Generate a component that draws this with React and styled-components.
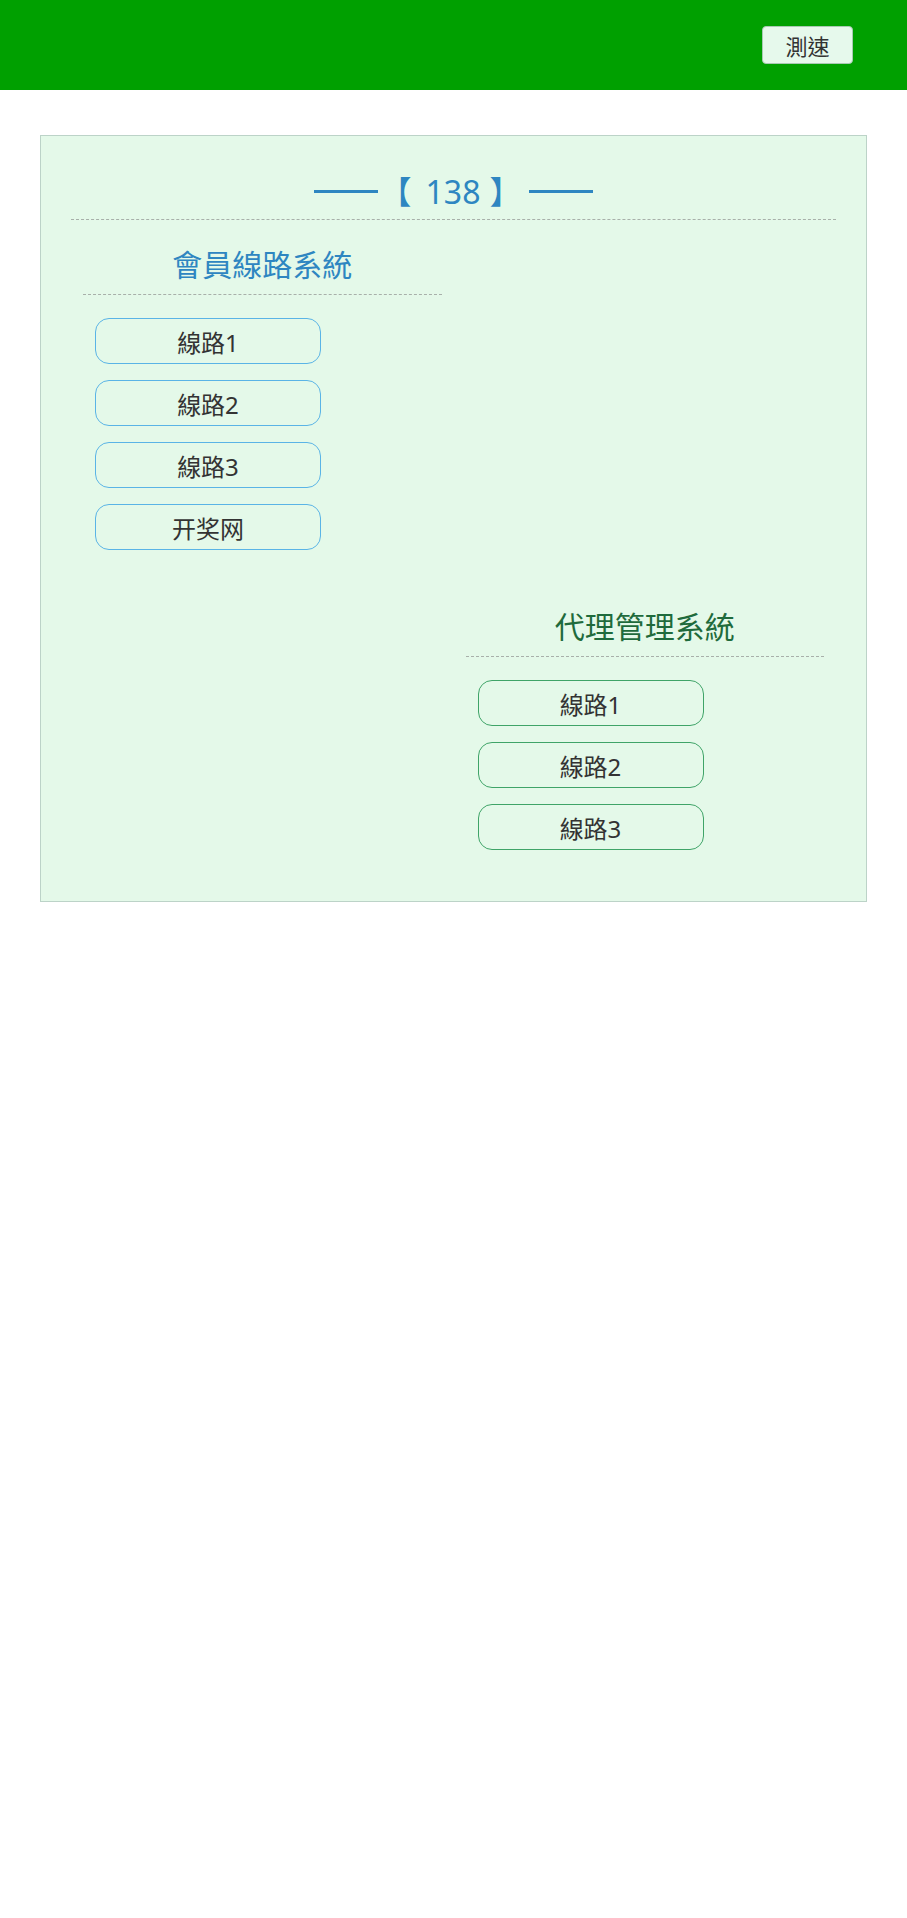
import React from 'react';
import styled, { createGlobalStyle } from 'styled-components';

const GlobalStyle = createGlobalStyle`
  html, body {
    margin: 0;
    padding: 0;
    background: #ffffff;
    font-family: "Noto Sans", "Noto Sans CJK TC", sans-serif;
  }
`;

const Header = styled.header`
  height: 90px;
  background: #00a000;
  display: flex;
  align-items: center;
  justify-content: flex-end;
  padding: 0 54px 0 0;
  box-sizing: border-box;
`;

const SpeedButton = styled.button`
  width: 91px;
  height: 38px;
  background: #e6f9ec;
  border: 1px solid #a9c9b3;
  border-radius: 4px;
  font-family: "Noto Sans", "Noto Sans CJK TC", sans-serif;
  font-size: 22px;
  color: #333;
  padding: 0;
  cursor: pointer;
`;

const Main = styled.main`
  padding: 45px 40px 0;
`;

const Panel = styled.section`
  background: #e4f9e9;
  border: 1px solid #bcd3c8;
  padding: 30px 30px 19px;
`;

const Heading = styled.h1`
  margin: 0;
  height: 51px;
  display: flex;
  align-items: center;
  justify-content: center;
  border-bottom: 1px dashed #a8b0aa;
  font-size: 32px;
  font-weight: 400;
  color: #2e86c1;
  line-height: 48px;
  padding-bottom: 2px;
`;

const Rule = styled.span`
  display: inline-block;
  width: 64px;
  height: 3px;
  background: #2e86c1;
  margin: ${p => p.$margin};
`;

const Bracket = styled.span`
  width: 32px;
`;

const Count = styled.span`
  margin: 0 9px 0 14px;
`;

const Columns = styled.div`
  display: grid;
  grid-template-columns: 1fr 1fr;
`;

const Column = styled.div`
  grid-column: ${p => p.$col};
  grid-row: ${p => p.$row};
  padding: 22px 12px 32px;
`;

const Title = styled.h2`
  margin: 0;
  font-size: 30px;
  font-weight: 400;
  line-height: 45px;
  text-align: center;
  color: ${p => p.$color};
  padding-bottom: 7px;
  border-bottom: 1px dashed #a8b0aa;
`;

const LinkList = styled.div`
  display: flex;
  flex-direction: column;
  gap: 16px;
  padding: 23px 12px 0;
`;

const LineButton = styled.a`
  display: flex;
  align-items: center;
  justify-content: center;
  width: 226px;
  height: 46px;
  box-sizing: border-box;
  border: 1px solid ${p => p.$border};
  border-radius: 14px;
  font-size: 24px;
  color: #333;
  text-decoration: none;
  cursor: pointer;
`;

const member = ['線路1', '線路2', '線路3', '开奖网'];
const agent = ['線路1', '線路2', '線路3'];

export default function App() {
  return (
    <>
      <GlobalStyle />
      <Header>
        <SpeedButton>測速</SpeedButton>
      </Header>
      <Main>
        <Panel>
          <Heading>
            <Rule $margin="0 2px 0 0" />
            <Bracket>【</Bracket>
            <Count>138</Count>
            <Bracket>】</Bracket>
            <Rule $margin="0 0 0 8px" />
          </Heading>
          <Columns>
            <Column $col={1} $row={1}>
              <Title $color="#2e86c1">會員線路系統</Title>
              <LinkList>
                {member.map(t => (
                  <LineButton key={t} $border="#5ab4e6">{t}</LineButton>
                ))}
              </LinkList>
            </Column>
            <Column $col={2} $row={2}>
              <Title $color="#1f6b3c">代理管理系統</Title>
              <LinkList>
                {agent.map(t => (
                  <LineButton key={t} $border="#3fa468">{t}</LineButton>
                ))}
              </LinkList>
            </Column>
          </Columns>
        </Panel>
      </Main>
    </>
  );
}
